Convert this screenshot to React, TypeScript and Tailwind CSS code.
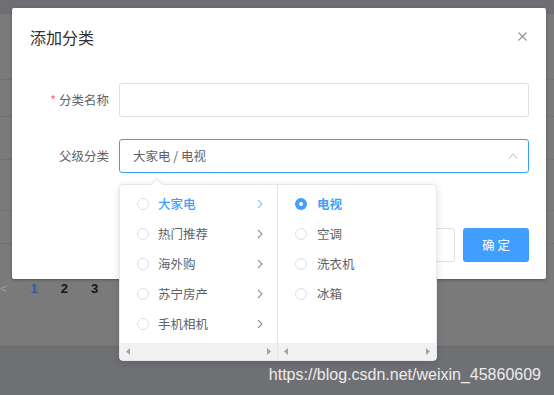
import React from "react";

const parents = ["大家电", "热门推荐", "海外购", "苏宁房产", "手机相机"];
const children = ["电视", "空调", "洗衣机", "冰箱"];

const Radio = ({ checked }: { checked?: boolean }) =>
  checked ? (
    <span className="w-[12px] h-[12px] rounded-full bg-[#409eff] flex items-center justify-center shrink-0">
      <span className="w-[4px] h-[4px] rounded-full bg-white"></span>
    </span>
  ) : (
    <span className="w-[12px] h-[12px] rounded-full border border-[#dcdfe6] bg-white shrink-0"></span>
  );

const ChevronRight = ({ color }: { color: string }) => (
  <svg width="6" height="10" viewBox="0 0 6 10" fill="none">
    <polyline points="1,1 5,5 1,9" stroke={color} strokeWidth="1.1" />
  </svg>
);

const ScrollBar = () => (
  <div className="h-[17px] bg-[#f1f1f1] flex items-center justify-between px-[6px]">
    <svg width="4" height="7" viewBox="0 0 4 7">
      <polygon points="4,0 4,7 0,3.5" fill="#a3a3a3" />
    </svg>
    <svg width="4" height="7" viewBox="0 0 4 7">
      <polygon points="0,0 0,7 4,3.5" fill="#a3a3a3" />
    </svg>
  </div>
);

const App = () => {
  return (
    <div className="w-[554px] h-[395px] relative overflow-hidden bg-[#7a7a7a] font-['Noto_Sans_CJK_SC',sans-serif]">
      {/* 背景のページ（オーバーレイ越し） */}
      <div className="flex flex-col">
        <div className="h-[14px] bg-[#6e6f72]"></div>
        <div className="h-[66px] border-b border-[#717171]"></div>
        <div className="h-[37px] border-b border-[#717171]"></div>
        <div className="h-[43px] border-b border-[#717171]"></div>
        <div className="h-[51px] border-b border-[#717171]"></div>
        <div className="h-[33px] border-b border-[#717171]"></div>
        <div className="h-[102px] flex items-center pb-[12px] gap-[23px] font-['Liberation_Sans',sans-serif] font-bold text-[13px]">
          <span className="text-[#9a9a9a] font-normal">&lt;</span>
          <span className="text-[#2c5c9c]">1</span>
          <span className="text-[#161616]">2</span>
          <span className="text-[#161616]">3</span>
        </div>
        <div className="h-[50px] bg-[#6f7073] border-t border-[#696a6c]"></div>
      </div>

      {/* ダイアログ */}
      <div className="absolute left-[12px] top-[8px] w-[534px] h-[271px] bg-white rounded-[2px] shadow-[0_1px_3px_rgba(0,0,0,0.3)] flex flex-col">
        <div className="flex items-start justify-between pt-[17px] pl-[18px] pr-[19px]">
          <span className="text-[16px] leading-[24px] text-[#303133]">添加分类</span>
          <svg className="mt-[7px]" width="9" height="9" viewBox="0 0 9 9">
            <line x1="0.5" y1="0.5" x2="8.5" y2="8.5" stroke="#909399" strokeWidth="1.1" />
            <line x1="8.5" y1="0.5" x2="0.5" y2="8.5" stroke="#909399" strokeWidth="1.1" />
          </svg>
        </div>
        <div className="flex flex-col gap-[22px] mt-[34px] pl-[18px] pr-[17px] text-[12.5px]">
          <div className="flex items-center">
            <label className="w-[79px] text-right text-[#606266]">
              <span className="text-[#f56c6c] mr-[3px]">*</span>分类名称
            </label>
            <div className="ml-[10px] flex-1 h-[34px] border border-[#dcdfe6] rounded-[3px]"></div>
          </div>
          <div className="flex items-center">
            <label className="w-[79px] text-right text-[#606266]">父级分类</label>
            <div className="ml-[10px] flex-1 h-[34px] border border-[#409eff] rounded-[3px] flex items-center justify-between pl-[13px] pr-[10px]">
              <span className="text-[#606266]">大家电 / 电视</span>
              <svg width="10" height="6" viewBox="0 0 10 6" fill="none">
                <polyline points="1,5.5 5,1 9,5.5" stroke="#c0c4cc" strokeWidth="1.1" />
              </svg>
            </div>
          </div>
        </div>
        <div className="flex justify-end gap-[8px] mt-[55px] pr-[17px] text-[12.5px]">
          <button className="w-[66px] h-[34px] border border-[#dcdfe6] rounded-[3px] text-[#606266] bg-white">
            取 消
          </button>
          <button className="w-[66px] h-[34px] rounded-[3px] text-white bg-[#409eff]">确 定</button>
        </div>
      </div>

      {/* カスケーダーのドロップダウン */}
      <div className="absolute left-[119px] top-[184px] w-[318px] h-[177px] bg-white border border-[#e4e7ed] rounded-[4px] shadow-[0_2px_8px_rgba(0,0,0,0.12)] text-[12.5px]">
        <div className="absolute -top-[5px] left-[32px] w-[9px] h-[9px] bg-white border-l border-t border-[#e4e7ed] rotate-45"></div>
        <div className="flex h-full relative">
          <div className="w-[158px] flex flex-col border-r border-[#e4e7ed]">
            <div className="flex-1 pt-[4px]">
              {parents.map((p, i) => (
                <div key={p} className="h-[30px] flex items-center pl-[17px] pr-[14px]">
                  <Radio />
                  <span
                    className={`ml-[9px] flex-1 ${
                      i === 0 ? "text-[#409eff] font-medium" : "text-[#606266]"
                    }`}
                  >
                    {p}
                  </span>
                  <ChevronRight color={i === 0 ? "#8cc4ff" : "#909399"} />
                </div>
              ))}
            </div>
            <ScrollBar />
          </div>
          <div className="flex-1 flex flex-col">
            <div className="flex-1 pt-[4px]">
              {children.map((c, i) => (
                <div key={c} className="h-[30px] flex items-center pl-[17px]">
                  <Radio checked={i === 0} />
                  <span
                    className={`ml-[10px] ${
                      i === 0 ? "text-[#409eff] font-bold" : "text-[#606266]"
                    }`}
                  >
                    {c}
                  </span>
                </div>
              ))}
            </div>
            <ScrollBar />
          </div>
        </div>
      </div>

      {/* 透かし */}
      <div className="absolute right-[13px] top-[364px] whitespace-nowrap text-[16px] leading-[22px] text-[#ececec] font-['Liberation_Sans',sans-serif]">
        https://blog.csdn.net/weixin_45860609
      </div>
    </div>
  );
};

export default App;
